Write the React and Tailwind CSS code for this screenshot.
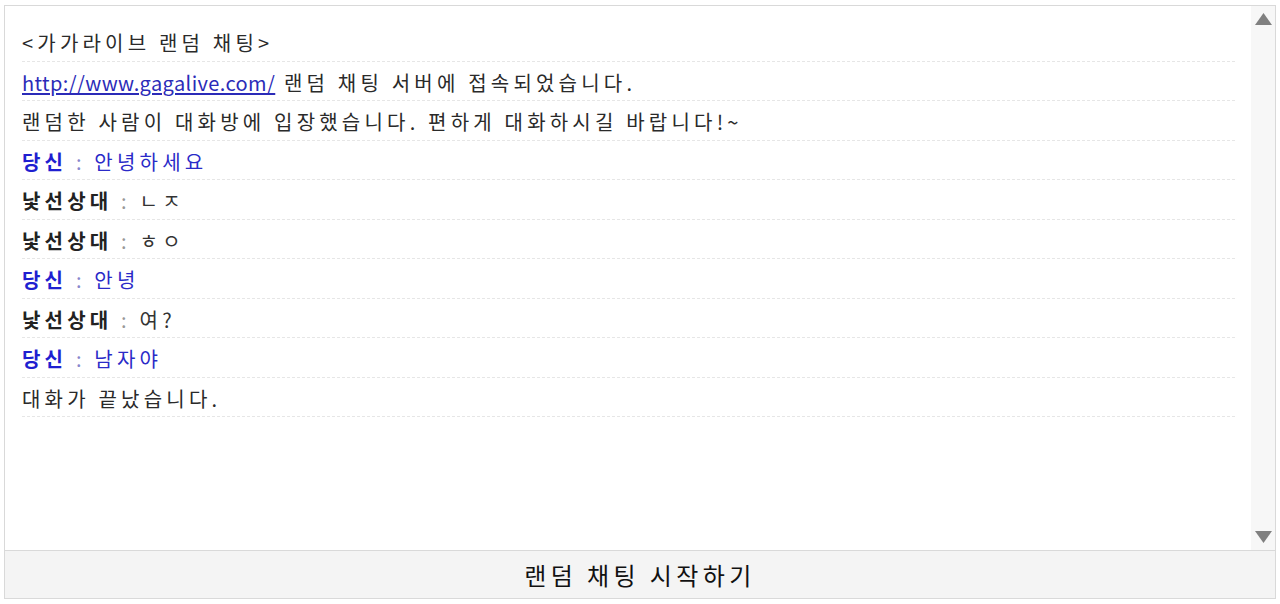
import React from 'react';

const lines = [
  { type: 'sys', text: '<가가라이브 랜덤 채팅>' },
  { type: 'link', text: '랜덤 채팅 서버에 접속되었습니다.' },
  { type: 'sys', text: '랜덤한 사람이 대화방에 입장했습니다. 편하게 대화하시길 바랍니다!~' },
  { type: 'me', text: '안녕하세요' },
  { type: 'you', text: 'ㄴㅈ' },
  { type: 'you', text: 'ㅎㅇ' },
  { type: 'me', text: '안녕' },
  { type: 'you', text: '여?' },
  { type: 'me', text: '남자야' },
  { type: 'sys', text: '대화가 끝났습니다.' },
];

function Line({ line }) {
  if (line.type === 'link') {
    return (
      <>
        <a href="#" className="text-[#2b2bb8] underline underline-offset-2 tracking-[0.4px]">http://www.gagalive.com/</a>{' '}
        {line.text}
      </>
    );
  }
  if (line.type === 'me') {
    return (
      <>
        <b className="text-[#1f1fd0] font-bold">당신</b>
        <span className="text-[#8888cc]"> : </span>
        <span className="text-[#2a2ac8]">{line.text}</span>
      </>
    );
  }
  if (line.type === 'you') {
    return (
      <>
        <b className="text-[#222] font-bold">낯선상대</b>
        <span className="text-[#999]"> : </span>
        <span className="text-[#333]">{line.text}</span>
      </>
    );
  }
  return <>{line.text}</>;
}

export default function App() {
  return (
    <div className="pt-[5px] px-[4px] pb-[5px] bg-white" style={{ fontFamily: '"Noto Sans CJK KR", "Noto Sans", sans-serif' }}>
      <div className="h-[594px] border border-[#d9d9d9] flex flex-col">
        <div className="flex-1 flex min-h-0">
          <div className="flex-1 pl-[17px] pr-[16px] pt-[16px] overflow-hidden">
            {lines.map((line, i) => (
              <div
                key={i}
                className="h-[39.5px] flex items-center border-b border-dashed border-[#e6e6e6] text-[20px] tracking-[4.2px] text-[#2a2a2a] whitespace-nowrap pt-[4px]"
              >
                <div><Line line={line} /></div>
              </div>
            ))}
          </div>
          <div className="w-[24px] bg-[#f7f7f7] flex flex-col items-center justify-between pt-[7px] pb-[7px]">
            <svg width="17" height="12" viewBox="0 0 17 12" className="block"><path d="M8.5 0 L17 12 L0 12 Z" fill="#808080" /></svg>
            <svg width="17" height="12" viewBox="0 0 17 12" className="block"><path d="M0 0 L17 0 L8.5 12 Z" fill="#808080" /></svg>
          </div>
        </div>
        <button className="h-[48px] border-t border-[#d9d9d9] bg-[#f4f4f4] text-[24px] tracking-[4.4px] text-[#111]">
          랜덤 채팅 시작하기
        </button>
      </div>
    </div>
  );
}
